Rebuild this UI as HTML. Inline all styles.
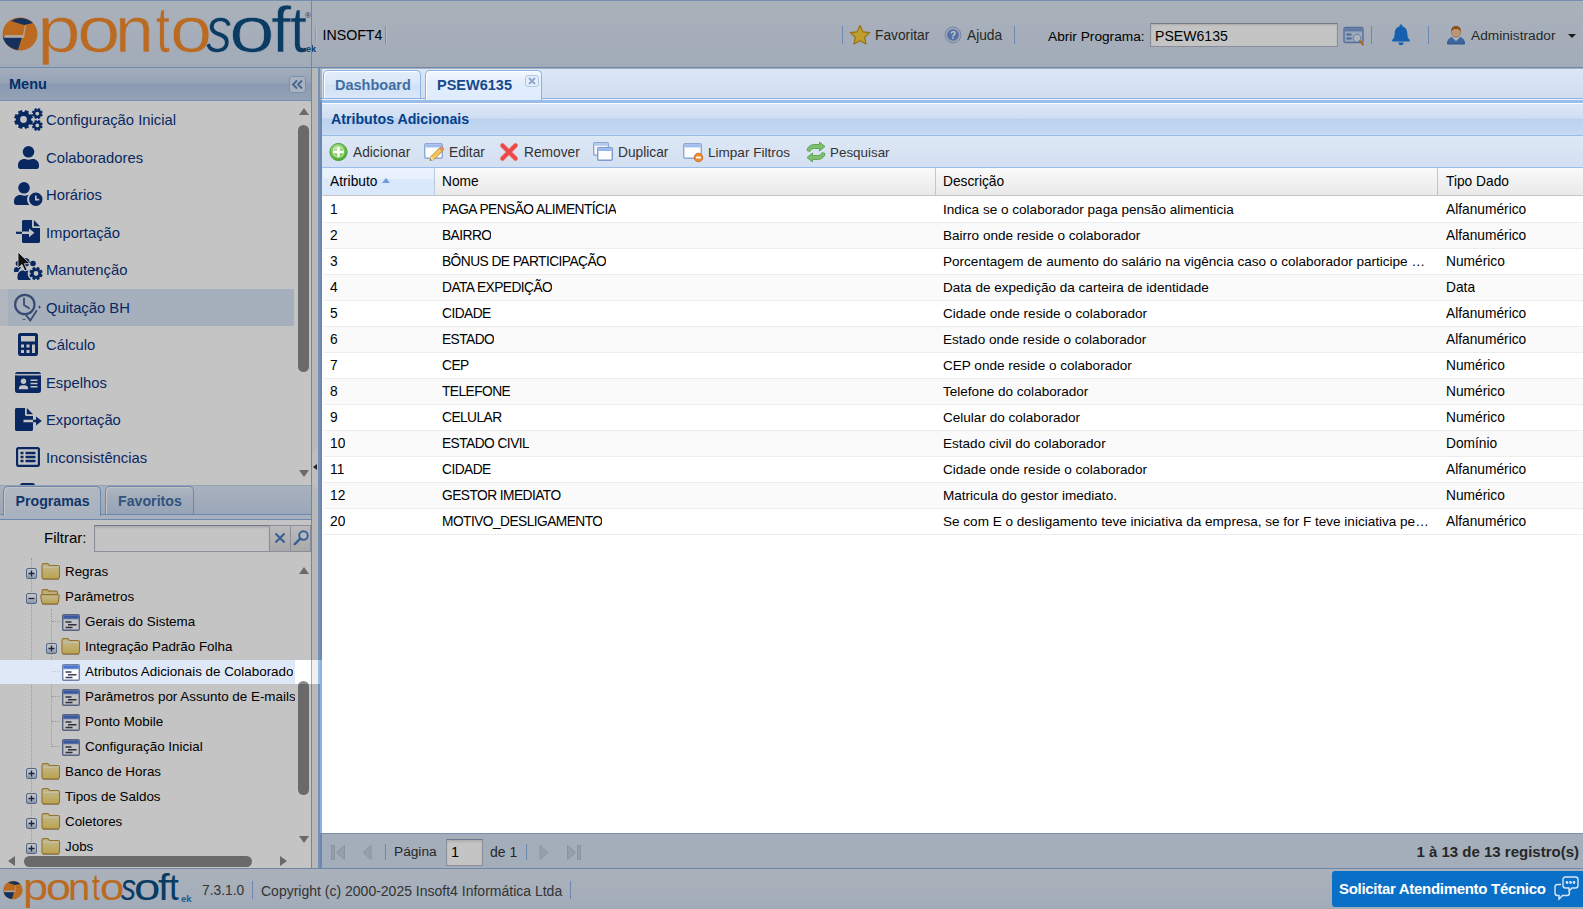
<!DOCTYPE html>
<html lang="pt-BR">
<head>
<meta charset="utf-8">
<title>PontoSoft - Atributos Adicionais</title>
<style>
*{box-sizing:border-box;margin:0;padding:0}
html,body{width:1583px;height:909px;overflow:hidden}
body{position:relative;background:#dfe8f6;font-family:"Liberation Sans",Arial,sans-serif;font-size:13.75px;color:#000;line-height:1}
.abs{position:absolute}
.t{position:absolute;white-space:nowrap;line-height:20px;height:20px}
.navy{color:#04408c}
.b{font-weight:bold}
.mask{position:absolute;background:rgba(0,0,0,.23);z-index:50}
.vsep{position:absolute;width:1px;background:#8fb3e6}
/* header */
#hdr{position:absolute;left:0;top:0;width:1583px;height:67px;background:linear-gradient(#dfe7f4,#d2dff0);box-shadow:inset 0 1px 0 #99bce8}
#hdrline{position:absolute;left:0;top:67px;width:1583px;height:2px;background:#8fb0de}
#hdrv{position:absolute;left:311px;top:0;width:1px;height:67px;background:#8fb0de}
.logo{position:absolute;white-space:nowrap}
.lt{position:absolute;top:0;transform-origin:0 0;display:block;-webkit-text-stroke:.6px #d9e3f2}
.lf{-webkit-text-stroke:0 transparent}
/* left */
#left{position:absolute;left:0;top:68px;width:311px;height:800px;background:#fff}
#leftb{position:absolute;left:311px;top:68px;width:1px;height:800px;background:#8fb0de}
#menuh{position:absolute;left:0;top:0;width:311px;height:33px;background:linear-gradient(#d5e2f5 0,#c3d5ee 45%,#b4c9e8 50%,#c0d3ed 100%);border-bottom:1px solid #99bce8}
.mi{position:absolute;left:46px;font-size:14.8px;color:#0c3580;white-space:nowrap;line-height:20px}
.ico{position:absolute}
/* tree */
.tr{position:absolute;left:0;width:295px;height:25px;overflow:hidden}
.tr span{position:absolute;top:4px;line-height:20px;white-space:nowrap;font-size:13.4px}
/* center */
#tabbar{position:absolute;left:318px;top:68px;width:1265px;height:31px;background:linear-gradient(#dce7f5,#cfddf0)}
.tab{position:absolute;top:72px;height:27px;border:1px solid #8db2e3;border-bottom:none;border-radius:5px 5px 0 0;box-shadow:inset 1px 1px 0 #fff;font-weight:bold;font-size:14.5px;line-height:25px;text-align:left;white-space:nowrap}
#ptitle{position:absolute;left:322px;top:103px;width:1261px;height:32px;background:linear-gradient(#dde8f6 0,#cfdef2 45%,#bbd1ee 50%,#c8daf2 100%);border-top:1px solid #fff}
#tbar{position:absolute;left:322px;top:135px;width:1261px;height:33px;background:linear-gradient(#dde8f5,#d3e0f2);border-top:1px solid #99bce8;border-bottom:1px solid #99bce8}
#ghead{position:absolute;left:323px;top:168px;width:1260px;height:28px;background:linear-gradient(#fafafa 0,#f1f1f1 50%,#e9e9e9 100%);border-bottom:1px solid #c5c5c5}
.gh{position:absolute;top:0;height:27px;line-height:28px;padding-left:7px;border-right:1px solid #c5c5c5;white-space:nowrap}
.row{position:absolute;left:323px;width:1260px;height:26px;border-bottom:1px solid #ededed;background:#fff}
.row.alt{background:#fafafa}
.row span{position:absolute;top:0;line-height:25px;white-space:nowrap;overflow:hidden}
.c1{left:7px}.c2{left:119px;letter-spacing:-.55px}.c3{left:620px;width:488px;text-overflow:ellipsis;font-size:13.550px}.c4{left:1123px}
#pbar{position:absolute;left:322px;top:833px;width:1261px;height:36px;background:#d6e3f3;border-top:1px solid #99bce8;border-bottom:1px solid #99bce8}
#foot{position:absolute;left:0;top:869px;width:1583px;height:40px;background:linear-gradient(#dfe7f4,#d3e0f1)}
</style>
</head>
<body>
<!-- ===== HEADER ===== -->
<div id="hdr">
  <svg class="abs" style="left:2px;top:17px" width="36" height="34" viewBox="0 0 36 34">
    <ellipse cx="18" cy="17" rx="17.5" ry="16.5" fill="#f28a2c"/>
    <path d="M9 4 A17 16 0 0 1 31 6 L22 8 Z" fill="#1d3f78"/>
    <path d="M1 20 L20 20 L16 33 A17 16 0 0 1 1 20Z" fill="#1d3f78"/>
    <path d="M3 18 L21 18 L23 8 L24 8 L22 21 L2 21Z" fill="#e9eef5" opacity=".75"/>
  </svg>
  <div class="logo" id="lg1" style="left:0;top:-6px;font-size:65px;line-height:72px;color:#f28a2c"><span class="lt" style="left:37px;transform:scaleX(1.207)">p</span><span class="lt" style="left:77px;transform:scaleX(1.2)">o</span><span class="lt" style="left:115px;transform:scaleX(1.071)">n</span><span class="lt" style="left:156px;transform:scaleX(.765)">t</span><span class="lt" style="left:170px;transform:scaleX(1.167)">o</span></div>
  <div class="logo" id="lg2" style="left:0;top:-6px;font-size:65px;line-height:72px;color:#0d4d80"><span class="lt" style="left:206px;transform:scaleX(.8);font-style:italic">s</span><span class="lt" style="left:228.5px;transform:scaleX(1.267)">o</span><span class="lt" style="left:271px;transform:scaleX(1.118)">f</span><span class="lt" style="left:290px;transform:scaleX(.941)">t</span></div>
  <div class="logo" style="left:305px;top:11px;font-size:8px;line-height:10px;color:#0d4d80">®</div>
  <div class="logo" style="left:306px;top:44px;font-size:9px;line-height:10px;color:#0d4d80;font-weight:bold">ek</div>
</div>
<div id="hdrv"></div>
<div class="vsep" style="left:315px;top:26px;height:18px;background:#b3c8ea;box-shadow:1px 0 0 #eef3fb"></div>
<div class="t" style="left:322.500px;top:25px;font-size:14.200px">INSOFT4</div>
<div class="vsep" style="left:385px;top:26px;height:18px;background:#9fbbe6;box-shadow:1px 0 0 #eef3fb"></div>

<div class="vsep" style="left:842px;top:26px;height:18px"></div>
<svg class="abs" style="left:849px;top:24px" width="22" height="22" viewBox="0 0 22 22"><path d="M11 1.5l2.9 6.3 6.8.8-5 4.7 1.3 6.8L11 16.7 4.9 20.1l1.4-6.8-5-4.7 6.8-.8z" fill="#f7cf3a" stroke="#c8941a" stroke-width="1.2" stroke-linejoin="round"/></svg>
<div class="t" style="left:875px;top:26px;color:#333">Favoritar</div>
<svg class="abs" style="left:944px;top:26px" width="18" height="18" viewBox="0 0 18 18"><circle cx="9" cy="9" r="8" fill="#c9d6ee" stroke="#9fb2d8" stroke-width="1"/><circle cx="9" cy="9" r="5.8" fill="#6f92d6"/><text x="9" y="13" font-family="Liberation Sans,sans-serif" font-size="10" font-weight="bold" fill="#fff" text-anchor="middle">?</text></svg>
<div class="t" style="left:967px;top:26px;color:#333">Ajuda</div>
<div class="vsep" style="left:1014px;top:26px;height:18px"></div>
<div class="t" style="left:1048px;top:27px;font-size:13.700px">Abrir Programa:</div>
<div class="abs" style="left:1150px;top:23px;width:188px;height:24px;background:#fff;border:1px solid #b5b8c8;border-top-color:#9aa0b4;box-shadow:inset 0 1px 2px #ddd"></div>
<div class="t" style="left:1155px;top:26px;font-size:14.1px">PSEW6135</div>
<svg class="abs" style="left:1343px;top:26px" width="22" height="20" viewBox="0 0 22 20"><rect x="1" y="1.500" width="19" height="15" rx="1.500" fill="#c9d8f0" stroke="#6f8fc6" stroke-width="1.400"/><rect x="1.700" y="2.200" width="17.600" height="3.200" fill="#7fa0d8"/><rect x="3.500" y="7.500" width="5" height="2" fill="#5f86cc"/><rect x="3.500" y="11.500" width="5" height="2" fill="#5f86cc"/><rect x="10" y="7.500" width="8" height="1.500" fill="#eef3fb"/><circle cx="14" cy="12" r="3.800" fill="#dfeafa" stroke="#8fb0e0" stroke-width="1.200"/><path d="M17 15l3 3.500" stroke="#e08a2c" stroke-width="2.200" stroke-linecap="round"/></svg>
<div class="vsep" style="left:1371px;top:26px;height:18px"></div>
<svg class="abs" style="left:1391px;top:23px" width="20" height="24" viewBox="0 0 20 24"><path d="M10 1.5c.9 0 1.5.7 1.5 1.5v.6c3 .7 4.8 3.2 4.800 6.400 0 4 1 5.500 2.400 6.800.5.500.2 1.700-.7 1.700H2c-.9 0-1.200-1.200-.7-1.700C2.700 15.500 3.700 14 3.700 10c0-3.200 1.800-5.700 4.800-6.400V3c0-.8.6-1.500 1.500-1.500z" fill="#1f7ee6"/><path d="M7.400 19.600h5.200a2.600 2.600 0 0 1-5.200 0z" fill="#1f7ee6"/></svg>
<div class="vsep" style="left:1428px;top:26px;height:18px"></div>
<svg class="abs" style="left:1446px;top:25px" width="20" height="20" viewBox="0 0 20 20"><path d="M1.500 19c0-5 3-7 8.500-7s8.500 2 8.500 7z" fill="#4f88d6" stroke="#2f5fa8" stroke-width=".8"/><path d="M6 12.500l4 3.500 4-3.500-1.500-1h-5z" fill="#dfe9f7"/><ellipse cx="10" cy="7" rx="4.600" ry="5.200" fill="#f2c49a" stroke="#c98d5a" stroke-width=".7"/><path d="M5.200 6.500C5 2.500 7.500 1 10 1s5.200 1.500 4.800 5.500C13.500 4.500 12 4 10 4S6.500 4.500 5.200 6.500z" fill="#b5651d"/></svg>
<div class="t" style="left:1471px;top:26px;color:#333;font-size:13.700px">Administrador</div>
<div class="abs" style="left:1568px;top:34px;width:0;height:0;border:4px solid transparent;border-top:4px solid #222;border-bottom:none"></div>
<div id="hdrline"></div>
<!-- ===== LEFT PANEL ===== -->
<div id="left">
  <div id="menuh"></div>
  <div class="t b" style="left:9px;top:6px;font-size:14.5px;color:#04408c">Menu</div>
  <div class="abs" style="left:289px;top:8px;width:17px;height:17px;border:1px solid #9dbbe6;border-radius:3px;background:#dce8f8"></div>
  <svg class="abs" style="left:291px;top:11px" width="13" height="11" viewBox="0 0 13 11"><path d="M6 1.500L2 5.500l4 4M11 1.500L7 5.500l4 4" fill="none" stroke="#5a82bd" stroke-width="1.800"/></svg>

  <!-- hover row -->
  <div class="abs" style="left:0;top:221px;width:8px;height:37px;background:#e5ecf8"></div>
  <div class="abs" style="left:8px;top:221px;width:286px;height:37px;background:#d9e4f5"></div>

  <!-- icons (coords relative to #left: y = abs-68) -->
  <svg class="ico" style="left:14px;top:40px" width="29" height="23" viewBox="0 0 29 23" fill="#0c3580" fill-rule="evenodd">
    <path d="M17.1 12.3L18.9 13.2L17.4 17.0L15.4 16.3L14.3 17.4L15.0 19.4L11.2 20.9L10.3 19.1L8.7 19.1L7.8 20.9L4.0 19.4L4.7 17.4L3.6 16.3L1.6 17.0L0.1 13.2L1.9 12.3L1.9 10.7L0.1 9.8L1.6 6.0L3.6 6.7L4.7 5.6L4.0 3.6L7.8 2.1L8.7 3.9L10.3 3.9L11.2 2.1L15.0 3.6L14.3 5.6L15.4 6.7L17.4 6.0L18.9 9.8L17.1 10.7ZM12.9 11.5A3.4 3.4 0 1 0 6.1 11.5A3.4 3.4 0 1 0 12.9 11.5Z"/>
    <path d="M27.6 6.1L28.8 6.6L27.9 8.8L26.7 8.3L26.0 9.0L26.5 10.2L24.3 11.1L23.8 9.9L22.8 9.9L22.3 11.1L20.1 10.2L20.6 9.0L19.9 8.3L18.7 8.8L17.8 6.6L19.0 6.1L19.0 5.1L17.8 4.6L18.7 2.4L19.9 2.9L20.6 2.2L20.1 1.0L22.3 0.1L22.8 1.3L23.8 1.3L24.3 0.1L26.5 1.0L26.0 2.2L26.7 2.9L27.9 2.4L28.8 4.6L27.6 5.1ZM25.2 5.6A1.9 1.9 0 1 0 21.4 5.6A1.9 1.9 0 1 0 25.2 5.6Z"/>
    <path d="M27.6 17.9L28.8 18.4L27.9 20.6L26.7 20.1L26.0 20.8L26.5 22.0L24.3 22.9L23.8 21.7L22.8 21.7L22.3 22.9L20.1 22.0L20.6 20.8L19.9 20.1L18.7 20.6L17.8 18.4L19.0 17.9L19.0 16.9L17.8 16.4L18.7 14.2L19.9 14.7L20.6 14.0L20.1 12.8L22.3 11.9L22.8 13.1L23.8 13.1L24.3 11.9L26.5 12.8L26.0 14.0L26.7 14.7L27.9 14.2L28.8 16.4L27.6 16.9ZM25.2 17.4A1.9 1.9 0 1 0 21.4 17.4A1.9 1.9 0 1 0 25.2 17.4Z"/>
  </svg>
  <div class="mi" style="top:42px">Configuração Inicial</div>

  <svg class="ico" style="left:18px;top:78px" width="21" height="23" viewBox="0 0 21 23" fill="#0c3580"><circle cx="10.500" cy="5.800" r="5.800"/><path d="M0 20.800v-1.600c0-3.700 2.800-6.200 6.300-6.200h.8c1 .5 2.200.7 3.400.7s2.400-.2 3.400-.7h.8c3.500 0 6.300 2.500 6.300 6.200v1.600c0 1.200-1 2.200-2.200 2.200H2.200C1 23 0 22 0 20.800z"/></svg>
  <div class="mi" style="top:80px">Colaboradores</div>

  <svg class="ico" style="left:14px;top:114px" width="29" height="24" viewBox="0 0 29 24" fill="#0c3580" fill-rule="evenodd"><circle cx="10" cy="5.800" r="5.800"/><path d="M0 20.800v-1.600C0 15.500 2.800 13 6.300 13h.8c1 .5 2.200.7 3.400.7s2.400-.2 3.400-.7h.6c-.9 1.300-1.400 2.800-1.400 4.500 0 2.100.9 4 2.300 5.500H2.200C1 23 0 22 0 20.800z"/><path d="M21.800 10.600a6.700 6.700 0 1 0 0 13.400 6.700 6.700 0 0 0 0-13.400zM21 13.500h1.600v3.300h2.600v1.600H21z"/></svg>
  <div class="mi" style="top:117px">Horários</div>

  <svg class="ico" style="left:16px;top:152px" width="24" height="24" viewBox="0 0 24 24" fill="#0c3580"><path d="M6 1.500C6 .7 6.700 0 7.500 0H16v6.500c0 .8.700 1.500 1.500 1.500H24v13.500c0 .8-.7 1.500-1.500 1.500h-15C6.700 23 6 22.300 6 21.500V14h7v3.200l5.400-4.400L13 8.400V11.600H6z"/><path d="M17.800 0l6.200 6.200h-6.200z"/><rect x="0" y="11.700" width="6" height="2.200"/></svg>
  <div class="mi" style="top:155px">Importação</div>

  <svg class="ico" style="left:14px;top:190px" width="30" height="22" viewBox="0 0 30 22" fill="#0c3580" fill-rule="evenodd"><circle cx="4.500" cy="5.500" r="2.800"/><circle cx="11.500" cy="4.200" r="4.200"/><circle cx="19" cy="5.500" r="2.800"/><path d="M0 13.500v-1.700C0 10.200 1.300 9 2.800 9h2.800c.7 0 1.300.3 1.800.7C5.700 10.700 4.600 12.300 4.300 14H1.200C.5 14.500 0 14 0 13.500z"/><path d="M3.500 20.500v-2.300C3.500 15 5.900 12.500 9 12.500h.4c.7.300 1.400.5 2.200.5s1.500-.2 2.200-.5h.6c-.5.900-.700 2-.700 3.100 0 2.300 1 4.400 2.800 5.400v1H5C4.200 22 3.500 21.300 3.500 20.500z"/><path d="M27.3 16.1L28.7 16.7L27.6 19.4L26.1 18.8L25.3 19.6L25.9 21.1L23.2 22.2L22.6 20.8L21.4 20.8L20.8 22.2L18.1 21.1L18.7 19.6L17.9 18.8L16.4 19.4L15.3 16.7L16.7 16.1L16.7 14.9L15.3 14.3L16.4 11.6L17.9 12.2L18.7 11.4L18.1 9.9L20.8 8.8L21.4 10.2L22.6 10.2L23.2 8.8L25.9 9.9L25.3 11.4L26.1 12.2L27.6 11.6L28.7 14.3L27.3 14.9ZM24.4 15.5A2.4 2.4 0 1 0 19.6 15.5A2.4 2.4 0 1 0 24.4 15.5Z"/></svg>
  <div class="mi" style="top:192px">Manutenção</div>

  <svg class="ico" style="left:13px;top:223px" width="30" height="33" viewBox="0 0 30 33" fill="none" stroke="#4a6396" stroke-width="2.200"><circle cx="11.800" cy="13.500" r="9.700"/><path d="M11 7.500v6.500l5 3.300" stroke-width="1.800" stroke-linecap="round"/><path d="M12.800 23.900l4.500 5.500 6.600-10.100" stroke-width="1.800"/><path d="M9.500 28.400h3M25 16.100h3M26.500 14.600v3" stroke-width=".9"/></svg>
  <div class="mi" style="top:230px">Quitação BH</div>

  <svg class="ico" style="left:18px;top:265px" width="20" height="23" viewBox="0 0 20 23" fill="#0c3580" fill-rule="evenodd"><path d="M2.200 0h15.600C19 0 20 1 20 2.200v18.600c0 1.200-1 2.200-2.200 2.200H2.200C1 23 0 22 0 20.800V2.200C0 1 1 0 2.200 0zM3 3v5.500h14V3zM3 11.500v3h3v-3zm5.500 0v3h3v-3zm5.500 0v8.500h3v-8.500zM3 17v3h3v-3zm5.500 0v3h3v-3z"/></svg>
  <div class="mi" style="top:267px">Cálculo</div>

  <svg class="ico" style="left:15px;top:304px" width="26" height="21" viewBox="0 0 26 21" fill="#0c3580" fill-rule="evenodd"><path d="M2.200 0h21.600C25 0 26 1 26 2.200v16.600c0 1.200-1 2.200-2.200 2.200H2.200C1 21 0 20 0 18.800V2.200C0 1 1 0 2.200 0zM2.200 3.800v15h21.600v-15zM8.500 6.500a2.700 2.700 0 1 1 0 5.400 2.700 2.700 0 0 1 0-5.400zM3.800 16.500c0-2.200 1.400-3.800 3.300-3.800h2.800c1.900 0 3.300 1.600 3.300 3.800v.5H3.800zM15.500 7.500h7v1.600h-7zm0 3.200h7v1.600h-7zm0 3.200h7v1.600h-7z"/><rect x="2" y="3.600" width="22" height="15.400" fill="#0c3580"/><circle cx="8.500" cy="9.200" r="2.700" fill="#fff"/><path d="M3.800 16.800c0-2.200 1.400-3.600 3.300-3.600h2.800c1.900 0 3.300 1.400 3.300 3.600v.4H3.800z" fill="#fff"/><path d="M15.500 7.500h7v1.500h-7zm0 3.200h7v1.500h-7zm0 3.200h7v1.500h-7z" fill="#fff"/><rect x="0" y="1.900" width="26" height="1.500" fill="#fff" opacity=".9"/></svg>
  <div class="mi" style="top:305px">Espelhos</div>

  <svg class="ico" style="left:15px;top:340px" width="27" height="23" viewBox="0 0 27 23" fill="#0c3580"><path d="M0 1.500C0 .7.700 0 1.500 0H10v6.500c0 .8.700 1.500 1.500 1.500H18v3.700H8.500v2.600H18V21.500c0 .8-.7 1.500-1.500 1.500h-15C.7 23 0 22.300 0 21.500z"/><path d="M11.800 0L18 6.200h-6.200z"/><path d="M18 11.700h3V8.400l5.800 4.600L21 17.600v-3.300h-3z"/></svg>
  <div class="mi" style="top:342px">Exportação</div>

  <svg class="ico" style="left:16px;top:379px" width="24" height="20" viewBox="0 0 24 20" fill="#0c3580" fill-rule="evenodd"><path d="M2.200 0h19.600C23 0 24 1 24 2.200v15.600c0 1.200-1 2.200-2.200 2.200H2.200C1 20 0 19 0 17.800V2.200C0 1 1 0 2.200 0zM2.200 2.200v15.600h19.600V2.200zM4.500 4.700h3v2.600h-3zm5 0h10v2.600h-10zm-5 4h3v2.600h-3zm5 0h10v2.600h-10zm-5 4h3v2.600h-3zm5 0h10v2.600h-10z"/></svg>
  <div class="mi" style="top:380px">Inconsistências</div>

  <svg class="ico" style="left:20px;top:414.500px" width="15" height="2.500" viewBox="0 0 15 2.500" fill="#0c3580"><path d="M0 2.500C0 1 1 0 2.500 0h10C14 0 15 1 15 2.500z"/></svg>

  <!-- menu scrollbar -->
  <div class="abs" style="left:299px;top:40px;width:0;height:0;border:5px solid transparent;border-bottom:7px solid #8b8b8b;border-top:none"></div>
  <div class="abs" style="left:298px;top:57px;width:11px;height:247px;border-radius:6px;background:#8b8b8b"></div>
  <div class="abs" style="left:299px;top:402px;width:0;height:0;border:5px solid transparent;border-top:7px solid #8b8b8b;border-bottom:none"></div>
</div>
<div id="leftb"></div>
<!-- ===== LEFT: programs tabs + tree ===== -->
<div class="abs" style="left:0;top:485px;width:311px;height:30px;background:linear-gradient(#dce7f7,#c9d9f0);border-top:1px solid #c3d4ec"></div>
<div class="abs" style="left:0;top:514px;width:311px;height:6px;background:#dbe7f8;border-top:1px solid #8db2e3;border-bottom:1px solid #8db2e3"></div>
<div class="tab" style="left:3px;top:486px;width:98px;height:30px;background:linear-gradient(#e8f0fb,#dbe7f8);color:#15498b;padding-left:11.500px;line-height:28px;z-index:2;font-size:14.200px">Programas</div>
<div class="tab" style="left:105px;top:486px;width:89px;height:28px;background:linear-gradient(#e1ebf8 0,#d0dff3 50%,#c2d5ee 100%);color:#416da3;padding-left:12px;line-height:28px;font-size:14.200px">Favoritos</div>

<div class="t" style="left:44px;top:528px;font-size:15px">Filtrar:</div>
<div class="abs" style="left:94px;top:525px;width:176px;height:27px;background:#fff;border:1px solid #b5b8c8;border-top-color:#8f9bb5;box-shadow:inset 0 2px 2px #e4e4e4"></div>
<div class="abs" style="left:270px;top:525px;width:21px;height:27px;background:linear-gradient(#f4f4f4,#dcdcdc);border:1px solid #b5b8c8;border-left:none"></div>
<div class="abs" style="left:291px;top:525px;width:20px;height:27px;background:linear-gradient(#f4f4f4,#dcdcdc);border:1px solid #b5b8c8;border-left:none"></div>
<svg class="abs" style="left:274px;top:532px" width="12" height="12" viewBox="0 0 12 12"><path d="M1.500 1.500l9 9M10.500 1.500l-9 9" stroke="#4d7fc4" stroke-width="2.200"/></svg>
<svg class="abs" style="left:293px;top:529px" width="17" height="17" viewBox="0 0 17 17"><circle cx="10.500" cy="6.500" r="4.300" fill="#e9f1fb" stroke="#4d7fc4" stroke-width="2"/><path d="M7.300 9.700L1.800 15.200" stroke="#4d7fc4" stroke-width="2.600" stroke-linecap="round"/></svg>

<!-- tree lines -->
<div class="abs" style="left:31px;top:558px;width:0;height:296px;border-left:1px dotted #c9c9c9"></div>
<div class="abs" style="left:51px;top:609px;width:0;height:138px;border-left:1px dotted #c9c9c9"></div>
<div class="abs" style="left:52px;top:621px;width:8px;height:0;border-top:1px dotted #c9c9c9"></div>
<div class="abs" style="left:52px;top:671px;width:8px;height:0;border-top:1px dotted #c9c9c9;z-index:60"></div>
<div class="abs" style="left:52px;top:696px;width:8px;height:0;border-top:1px dotted #c9c9c9"></div>
<div class="abs" style="left:52px;top:721px;width:8px;height:0;border-top:1px dotted #c9c9c9"></div>
<div class="abs" style="left:52px;top:746px;width:8px;height:0;border-top:1px dotted #c9c9c9"></div>

<!-- selected row bg -->
<div class="abs" style="left:0;top:660px;width:295px;height:24px;background:#dfe8f6"></div>

<svg width="0" height="0" style="position:absolute">
  <defs>
    <linearGradient id="pg" x1="0" y1="0" x2="0" y2="1"><stop offset="0" stop-color="#ffffff"/><stop offset=".45" stop-color="#f2f5fa"/><stop offset="1" stop-color="#aebcd6"/></linearGradient>
    <g id="plus"><rect x=".5" y=".5" width="10" height="10" rx="1.500" fill="url(#pg)" stroke="#7088b0"/><path d="M2.500 5.500h6M5.500 2.500v6" stroke="#1f2f5a" stroke-width="1.300"/></g>
    <g id="minus"><rect x=".5" y=".5" width="10" height="10" rx="1.500" fill="url(#pg)" stroke="#7088b0"/><path d="M2.500 5.500h6" stroke="#1f2f5a" stroke-width="1.300"/></g>
    <linearGradient id="fg" x1="0" y1="0" x2="0" y2="1"><stop offset="0" stop-color="#fff3bf"/><stop offset="1" stop-color="#f2d468"/></linearGradient>
    <g id="folder"><path d="M1 3.200C1 2.300 1.700 1.600 2.600 1.600h4.200l1.800 1.900h8.300c.9 0 1.600.7 1.600 1.600v10c0 .9-.7 1.600-1.600 1.600H2.600c-.9 0-1.600-.7-1.600-1.600z" fill="url(#fg)" stroke="#c1963a" stroke-width="1.100"/><path d="M2 5.300h15.600" stroke="#fffbe6" stroke-width="1"/><path d="M2 17.500h16" stroke="#8f7a45" stroke-width="1" opacity=".55"/></g>
    <g id="folderopen"><path d="M2 4.200C2 3.300 2.700 2.600 3.600 2.600h3.700l1.500 1.500h7.100c.9 0 1.600.7 1.600 1.600V8H2z" fill="#f6e29a" stroke="#c1963a" stroke-width="1.100"/><path d="M.8 9.200C.7 8.300 1.300 7.600 2.200 7.600h15.600c.9 0 1.500.7 1.400 1.600l-.9 6c-.1.900-.9 1.600-1.800 1.600H3.500c-.9 0-1.700-.7-1.800-1.600z" fill="url(#fg)" stroke="#c1963a" stroke-width="1.100"/><path d="M2 17.500h16" stroke="#8f7a45" opacity=".55"/></g>
    <g id="leaf"><rect x=".7" y=".7" width="16.600" height="15.600" rx="1.200" fill="#fdfdfe" stroke="#6f7fa6" stroke-width="1.400"/><rect x="1.400" y="1.400" width="15.200" height="3.600" fill="#4b73d0"/><rect x="1.400" y="4.600" width="15.200" height=".8" fill="#9fb6ea"/><path d="M3.500 8h6M6 10.700h8.500M3.500 13.400h7" stroke="#3a3f55" stroke-width="1.500"/></g>
  </defs>
</svg>

<svg class="abs" style="left:0;top:559px" width="296" height="296" viewBox="0 0 296 296">
  <use href="#plus" x="26" y="9"/><use href="#folder" x="41" y="3"/>
  <use href="#minus" x="26" y="34"/><use href="#folderopen" x="40" y="28"/>
  <use href="#leaf" x="62" y="55"/>
  <use href="#plus" x="46" y="84"/><use href="#folder" x="61" y="78"/>
  <use href="#leaf" x="62" y="130"/>
  <use href="#leaf" x="62" y="155"/>
  <use href="#leaf" x="62" y="180"/>
  <use href="#plus" x="26" y="209"/><use href="#folder" x="41" y="203"/>
  <use href="#plus" x="26" y="234"/><use href="#folder" x="41" y="228"/>
  <use href="#plus" x="26" y="259"/><use href="#folder" x="41" y="253"/>
  <use href="#plus" x="26" y="284"/><use href="#folder" x="41" y="278"/>
</svg>
<svg class="abs" style="left:62px;top:664px" width="18" height="17" viewBox="0 0 18 17"><use href="#leaf" x="0" y="0"/></svg>

<div class="tr" style="top:558px"><span style="left:65px">Regras</span></div>
<div class="tr" style="top:583px"><span style="left:65px">Parâmetros</span></div>
<div class="tr" style="top:608px"><span style="left:85px">Gerais do Sistema</span></div>
<div class="tr" style="top:633px"><span style="left:85px">Integração Padrão Folha</span></div>
<div class="tr" style="top:658px;width:293px"><span style="left:85px">Atributos Adicionais de Colaboradores</span></div>
<div class="tr" style="top:683px"><span style="left:85px">Parâmetros por Assunto de E-mails</span></div>
<div class="tr" style="top:708px"><span style="left:85px">Ponto Mobile</span></div>
<div class="tr" style="top:733px"><span style="left:85px">Configuração Inicial</span></div>
<div class="tr" style="top:758px"><span style="left:65px">Banco de Horas</span></div>
<div class="tr" style="top:783px"><span style="left:65px">Tipos de Saldos</span></div>
<div class="tr" style="top:808px"><span style="left:65px">Coletores</span></div>
<div class="tr" style="top:833px;height:21px"><span style="left:65px">Jobs</span></div>

<!-- tree scrollbars -->
<div class="abs" style="left:299px;top:567px;width:0;height:0;border:5px solid transparent;border-bottom:7px solid #8b8b8b;border-top:none"></div>
<div class="abs" style="left:298px;top:681px;width:11px;height:114px;border-radius:6px;background:#8b8b8b"></div>
<div class="abs" style="left:299px;top:836px;width:0;height:0;border:5px solid transparent;border-top:7px solid #8b8b8b;border-bottom:none"></div>
<div class="abs" style="left:8px;top:856px;width:0;height:0;border:5px solid transparent;border-right:7px solid #8b8b8b;border-left:none"></div>
<div class="abs" style="left:24px;top:856px;width:228px;height:11px;border-radius:6px;background:#8b8b8b"></div>
<div class="abs" style="left:280px;top:856px;width:0;height:0;border:5px solid transparent;border-left:7px solid #8b8b8b;border-right:none"></div>
<!-- ===== CENTER ===== -->
<div class="abs" style="left:312px;top:68px;width:6px;height:800px;background:#f0f0f0"></div>
<div class="abs" style="left:318px;top:68px;width:4px;height:800px;background:#8db2e3"></div>
<div class="abs" style="left:312px;top:447px;width:6px;height:43px;background:#f8f8f8;clip-path:polygon(0 12%,100% 0,100% 100%,0 88%)"></div>
<div class="abs" style="left:313px;top:464px;width:0;height:0;border:3.500px solid transparent;border-right:4px solid #333;border-left:none"></div>
<div id="tabbar"></div>
<div class="abs" style="left:318px;top:68px;width:2px;height:800px;background:#99bce8"></div>
<div class="abs" style="left:320px;top:98px;width:1263px;height:5px;background:#99bce8;border-top:1px solid #8db2e3"></div>
<div class="abs" style="left:320px;top:99px;width:1263px;height:1px;background:#eaf2fc"></div>
<div class="tab" style="left:323px;top:70px;width:98px;height:28px;background:linear-gradient(#e4eefb 0,#d9e6f8 50%,#cfe0f6 52%,#dce8f9 100%);color:#416da3;padding-left:11px;line-height:29px">Dashboard</div>
<div class="tab" style="left:425px;top:70px;width:117px;height:30px;background:linear-gradient(#f3f8fe 0,#e3eefc 40%,#deecfd 100%);color:#15498b;padding-left:11px;line-height:29px">PSEW6135</div>
<div class="abs" style="left:525px;top:75px;width:14px;height:12px;border:1px solid #b3c8e6;border-radius:3px;background:#e6eefa"></div>
<svg class="abs" style="left:528px;top:77px" width="8" height="8" viewBox="0 0 8 8"><path d="M1 1l6 6M7 1L1 7" stroke="#8aa4cc" stroke-width="1.800"/></svg>

<div id="ptitle"></div>
<div class="t b" style="left:331px;top:109px;color:#04408c;font-size:14.2px">Atributos Adicionais</div>
<div id="tbar"></div>

<!-- toolbar buttons -->
<svg class="abs" style="left:329px;top:142px" width="20" height="20" viewBox="0 0 20 20"><defs><radialGradient id="gadd" cx=".4" cy=".3" r=".8"><stop offset="0" stop-color="#b5e39a"/><stop offset=".6" stop-color="#6cc04a"/><stop offset="1" stop-color="#3f9a2a"/></radialGradient></defs><circle cx="9.500" cy="10" r="8.600" fill="url(#gadd)" stroke="#4e9e3a" stroke-width="1"/><circle cx="9.500" cy="10" r="5.200" fill="none" stroke="#e9f7e2" stroke-width="1.200" opacity=".7"/><path d="M9.500 6.200v7.600M5.700 10h7.600" stroke="#fff" stroke-width="2.600" stroke-linecap="round"/></svg>
<div class="t" style="left:353px;top:143px;color:#333">Adicionar</div>

<svg class="abs" style="left:423px;top:141px" width="22" height="22" viewBox="0 0 22 22"><rect x="1.700" y="2.700" width="17.600" height="14.600" rx="1.500" fill="#fdfdfe" stroke="#8ea7d2" stroke-width="1.400"/><rect x="2.400" y="3.400" width="16.200" height="3" fill="#9dbcf0"/><path d="M7 19.500l1-4 8.500-8.500 3 3-8.500 8.500z" fill="#f4c55a" stroke="#b8862a" stroke-width=".9"/><path d="M16.500 7l3 3 1-1.200c.5-.6.400-1.300-.1-1.800l-1-1c-.5-.5-1.300-.5-1.800 0z" fill="#e58f8f" stroke="#b8862a" stroke-width=".7"/><path d="M7 19.500l1-4 3 3z" fill="#f6e3c0"/><path d="M7 19.500l.4-1.600 1.200 1.200z" fill="#333"/></svg>
<div class="t" style="left:449px;top:143px;color:#333">Editar</div>

<svg class="abs" style="left:499px;top:142px" width="20" height="20" viewBox="0 0 20 20"><path d="M3.500 3.500l13 13M16.500 3.500l-13 13" stroke="#f08a8a" stroke-width="5" stroke-linecap="round"/><path d="M3.500 3.500l13 13M16.500 3.500l-13 13" stroke="#ec4747" stroke-width="3.400" stroke-linecap="round"/></svg>
<div class="t" style="left:524px;top:143px;color:#333">Remover</div>

<svg class="abs" style="left:592px;top:141px" width="22" height="22" viewBox="0 0 22 22"><rect x="1.700" y="1.700" width="14.600" height="12.600" rx="1.200" fill="#f4f8fd" stroke="#8ea7d2" stroke-width="1.400"/><rect x="2.400" y="2.400" width="13.200" height="2.400" fill="#b3caf0"/><rect x="5.700" y="6.700" width="14.600" height="12.600" rx="1.200" fill="#fdfdfe" stroke="#7f9bcb" stroke-width="1.400"/><rect x="6.400" y="7.400" width="13.200" height="2.600" fill="#94b6ee"/></svg>
<div class="t" style="left:618px;top:143px;color:#333">Duplicar</div>

<svg class="abs" style="left:682px;top:141px" width="22" height="22" viewBox="0 0 22 22"><rect x="1.700" y="2.700" width="17.600" height="14.600" rx="1.500" fill="#fdfdfe" stroke="#8ea7d2" stroke-width="1.400"/><rect x="2.400" y="3.400" width="16.200" height="3" fill="#9dbcf0"/><circle cx="16.500" cy="16.500" r="4.300" fill="#f08a2e" stroke="#c9641a" stroke-width=".8"/><rect x="14" y="15.600" width="5" height="1.800" fill="#fff"/></svg>
<div class="t" style="left:708px;top:143px;color:#333;font-size:13.550px">Limpar Filtros</div>

<svg class="abs" style="left:805px;top:141px" width="22" height="22" viewBox="0 0 22 22" fill="#7dbf6a" stroke="#4f9a45" stroke-width=".8" stroke-linejoin="round"><path d="M2 9.500C2.500 5.500 6 3.500 9.500 3.500h5V1l5.500 4.500L14.500 10V7.500H9.500C7 7.500 5.500 8.500 5 10.500z"/><path d="M20 12.500c-.5 4-4 6-7.500 6h-5V21L2 16.500 7.500 12v2.500h5c2.500 0 4-1 4.500-3z"/></svg>
<div class="t" style="left:830px;top:143px;color:#333;font-size:13.400px">Pesquisar</div>
<!-- ===== GRID ===== -->
<div class="abs" style="left:322px;top:196px;width:1261px;height:637px;background:#fff"></div>
<div class="abs" style="left:322px;top:168px;width:1px;height:28px;background:#dfebfb"></div>
<div id="ghead">
 <div class="gh" style="left:0;width:112px;background:linear-gradient(#ebf3fd 0,#e6f0fc 40%,#d9e8fb 42%,#d9e8fb 100%);border-right-color:#b9cbe3">Atributo</div>
 <div class="gh" style="left:112px;width:501px">Nome</div>
 <div class="gh" style="left:613px;width:502px">Descrição</div>
 <div class="gh" style="left:1115px;width:200px;border-right:none;padding-left:8px">Tipo Dado</div>
 <div class="abs" style="left:59px;top:10px;width:0;height:0;border:4.5px solid transparent;border-bottom:5px solid #6f9bd8;border-top:none"></div>
</div>
<div class="row" style="top:197px"><span class="c1">1</span><span class="c2">PAGA PENSÃO ALIMENTÍCIA</span><span class="c3">Indica se o colaborador paga pensão alimenticia</span><span class="c4">Alfanumérico</span></div>
<div class="row alt" style="top:223px"><span class="c1">2</span><span class="c2">BAIRRO</span><span class="c3">Bairro onde reside o colaborador</span><span class="c4">Alfanumérico</span></div>
<div class="row" style="top:249px"><span class="c1">3</span><span class="c2">BÔNUS DE PARTICIPAÇÃO</span><span class="c3">Porcentagem de aumento do salário na vigência caso o colaborador participe de programa de bônus</span><span class="c4">Numérico</span></div>
<div class="row alt" style="top:275px"><span class="c1">4</span><span class="c2">DATA EXPEDIÇÃO</span><span class="c3">Data de expedição da carteira de identidade</span><span class="c4">Data</span></div>
<div class="row" style="top:301px"><span class="c1">5</span><span class="c2">CIDADE</span><span class="c3">Cidade onde reside o colaborador</span><span class="c4">Alfanumérico</span></div>
<div class="row alt" style="top:327px"><span class="c1">6</span><span class="c2">ESTADO</span><span class="c3">Estado onde reside o colaborador</span><span class="c4">Alfanumérico</span></div>
<div class="row" style="top:353px"><span class="c1">7</span><span class="c2">CEP</span><span class="c3">CEP onde reside o colaborador</span><span class="c4">Numérico</span></div>
<div class="row alt" style="top:379px"><span class="c1">8</span><span class="c2">TELEFONE</span><span class="c3">Telefone do colaborador</span><span class="c4">Numérico</span></div>
<div class="row" style="top:405px"><span class="c1">9</span><span class="c2">CELULAR</span><span class="c3">Celular do colaborador</span><span class="c4">Numérico</span></div>
<div class="row alt" style="top:431px"><span class="c1">10</span><span class="c2">ESTADO CIVIL</span><span class="c3">Estado civil do colaborador</span><span class="c4">Domínio</span></div>
<div class="row" style="top:457px"><span class="c1">11</span><span class="c2">CIDADE</span><span class="c3">Cidade onde reside o colaborador</span><span class="c4">Alfanumérico</span></div>
<div class="row alt" style="top:483px"><span class="c1">12</span><span class="c2">GESTOR IMEDIATO</span><span class="c3">Matricula do gestor imediato.</span><span class="c4">Numérico</span></div>
<div class="row" style="top:509px"><span class="c1">20</span><span class="c2">MOTIVO_DESLIGAMENTO</span><span class="c3">Se com E o desligamento teve iniciativa da empresa, se for F teve iniciativa pelo funcionário</span><span class="c4">Alfanumérico</span></div>
<!-- ===== PAGING BAR ===== -->
<div id="pbar"></div>
<svg class="abs" style="left:331px;top:845px;opacity:.55" width="14" height="15" viewBox="0 0 14 15"><rect x=".5" y=".5" width="3" height="14" fill="#b9c0cf" stroke="#8e98ad" stroke-width=".8"/><path d="M13.500 .5v14l-8-7z" fill="#b9c0cf" stroke="#8e98ad" stroke-width=".8"/></svg>
<svg class="abs" style="left:362px;top:845px;opacity:.55" width="10" height="15" viewBox="0 0 10 15"><path d="M9 .5v14l-8-7z" fill="#b9c0cf" stroke="#8e98ad" stroke-width=".8"/></svg>
<div class="vsep" style="left:385px;top:844px;height:16px"></div>
<div class="t" style="left:394px;top:842px;color:#333;font-size:13.700px">Página</div>
<div class="abs" style="left:446px;top:839px;width:37px;height:27px;background:#fff;border:1px solid #b5b8c8;border-top-color:#8f9bb5;box-shadow:inset 0 2px 2px #e4e4e4"></div>
<div class="t" style="left:451px;top:842px;font-size:14.5px">1</div>
<div class="t" style="left:490px;top:842px;color:#333;font-size:14px">de 1</div>
<div class="vsep" style="left:526px;top:844px;height:16px"></div>
<svg class="abs" style="left:539px;top:845px;opacity:.55" width="10" height="15" viewBox="0 0 10 15"><path d="M1 .5v14l8-7z" fill="#b9c0cf" stroke="#8e98ad" stroke-width=".8"/></svg>
<svg class="abs" style="left:567px;top:845px;opacity:.55" width="14" height="15" viewBox="0 0 14 15"><path d="M.5 .5v14l8-7z" fill="#b9c0cf" stroke="#8e98ad" stroke-width=".8"/><rect x="10.500" y=".5" width="3" height="14" fill="#b9c0cf" stroke="#8e98ad" stroke-width=".8"/></svg>
<div class="t b" style="right:4px;top:842px;color:#333;font-size:15px">1 à 13 de 13 registro(s)</div>

<!-- ===== FOOTER ===== -->
<div id="foot">
  <svg class="abs" style="left:3px;top:11px" width="20" height="20" viewBox="0 0 36 34"><ellipse cx="18" cy="17" rx="17.500" ry="16.500" fill="#f28a2c"/><path d="M9 4A17 16 0 0 1 31 6L22 8Z" fill="#1d3f78"/><path d="M1 20L20 20 16 33A17 16 0 0 1 1 20Z" fill="#1d3f78"/><path d="M3 18L21 18 23 8 24 8 22 21 2 21Z" fill="#e9eef5" opacity=".75"/></svg>
  <div class="logo" id="fl1" style="left:0;top:-1.500px;font-size:36.400px;line-height:40px;color:#f28a2c"><span class="lt lf" style="left:23.1px;transform:scaleX(1.243)">p</span><span class="lt lf" style="left:46.2px;transform:scaleX(1.236)">o</span><span class="lt lf" style="left:68.1px;transform:scaleX(1.103)">n</span><span class="lt lf" style="left:91.8px;transform:scaleX(0.788)">t</span><span class="lt lf" style="left:99.9px;transform:scaleX(1.202)">o</span></div>
  <div class="logo" id="fl2" style="left:0;top:-1.500px;font-size:36.400px;line-height:40px;color:#0d4d80"><span class="lt lf" style="left:120.6px;transform:scaleX(0.824);font-style:italic">s</span><span class="lt lf" style="left:133.6px;transform:scaleX(1.305)">o</span><span class="lt lf" style="left:158.1px;transform:scaleX(1.152)">f</span><span class="lt lf" style="left:169.1px;transform:scaleX(0.969)">t</span></div>
  <div class="logo" style="left:181px;top:25px;font-size:9.500px;line-height:10px;color:#2a7ab8;font-weight:bold">ek</div>
  <div class="t" style="left:202px;top:12px;color:#444;font-size:13.800px">7.3.1.0</div>
  <div class="vsep" style="left:252px;top:12px;height:18px"></div>
  <div class="t" style="left:261px;top:12px;color:#444;font-size:14px">Copyright (c) 2000-2025 Insoft4 Informática Ltda</div>
  <div class="vsep" style="left:570px;top:12px;height:18px"></div>
</div>
<div class="abs" style="left:0;top:868px;width:1583px;height:1px;background:#8fb0de"></div>
<!-- ===== MASKS (spotlight) ===== -->
<div class="mask" style="left:0;top:0;width:1583px;height:69px"></div>
<div class="mask" style="left:0;top:69px;width:322px;height:591px"></div>
<div class="mask" style="left:0;top:684px;width:320px;height:225px"></div>
<div class="mask" style="left:320px;top:833px;width:1263px;height:76px"></div>

<!-- support button (above masks) -->
<div class="abs" style="left:1332px;top:871px;width:251px;height:36px;background:#0a6fc7;border-radius:3px 0 0 3px;z-index:70"></div>
<div class="t b" style="left:1339px;top:879px;color:#fff;font-size:15px;z-index:71;letter-spacing:-.3px">Solicitar Atendimento Técnico</div>
<svg class="abs" style="left:1552px;top:876px;z-index:71" width="28" height="26" viewBox="0 0 28 26" fill="none" stroke="#d6e6f7" stroke-width="1.400"><path d="M11 3.500c0-1.400 1.100-2.500 2.500-2.500h10C24.900 1 26 2.100 26 3.500v6c0 1.400-1.100 2.500-2.500 2.500H20l-3 3v-3h-3.500C12.100 12 11 10.900 11 9.500z"/><path d="M9 8.500H5.500C4.100 8.500 3 9.600 3 11v6c0 1.400 1.100 2.500 2.500 2.500H7V23l3.500-3.500H15c1.400 0 2.500-1.100 2.500-2.500v-1.500"/><circle cx="15" cy="6.500" r=".7" fill="#d6e6f7"/><circle cx="18.500" cy="6.500" r=".7" fill="#d6e6f7"/><circle cx="22" cy="6.500" r=".7" fill="#d6e6f7"/></svg>

<!-- mouse cursor -->
<svg class="abs" style="left:17px;top:251px;z-index:80" width="14" height="22" viewBox="0 0 14 22"><path d="M1 1v16l4-3.500 2.800 6.500 2.400-1-2.800-6.300H13z" fill="#111" stroke="#ddd" stroke-width=".8"/></svg>
</body>
</html>
